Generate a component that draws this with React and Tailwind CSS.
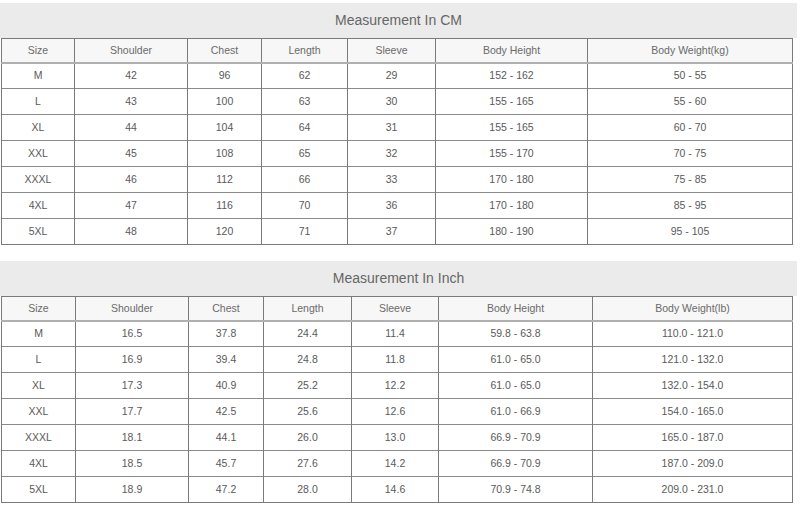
import React from "react";

const cm = {
  title: "Measurement In CM",
  cols: [73, 113, 74, 86, 88, 152, 205],
  head: ["Size", "Shoulder", "Chest", "Length", "Sleeve", "Body Height", "Body Weight(kg)"],
  rows: [
    ["M", "42", "96", "62", "29", "152 - 162", "50 - 55"],
    ["L", "43", "100", "63", "30", "155 - 165", "55 - 60"],
    ["XL", "44", "104", "64", "31", "155 - 165", "60 - 70"],
    ["XXL", "45", "108", "65", "32", "155 - 170", "70 - 75"],
    ["XXXL", "46", "112", "66", "33", "170 - 180", "75 - 85"],
    ["4XL", "47", "116", "70", "36", "170 - 180", "85 - 95"],
    ["5XL", "48", "120", "71", "37", "180 - 190", "95 - 105"],
  ],
};

const inch = {
  title: "Measurement In Inch",
  cols: [74, 113, 75, 88, 87, 154, 200],
  head: ["Size", "Shoulder", "Chest", "Length", "Sleeve", "Body Height", "Body Weight(lb)"],
  rows: [
    ["M", "16.5", "37.8", "24.4", "11.4", "59.8 - 63.8", "110.0 - 121.0"],
    ["L", "16.9", "39.4", "24.8", "11.8", "61.0 - 65.0", "121.0 - 132.0"],
    ["XL", "17.3", "40.9", "25.2", "12.2", "61.0 - 65.0", "132.0 - 154.0"],
    ["XXL", "17.7", "42.5", "25.6", "12.6", "61.0 - 66.9", "154.0 - 165.0"],
    ["XXXL", "18.1", "44.1", "26.0", "13.0", "66.9 - 70.9", "165.0 - 187.0"],
    ["4XL", "18.5", "45.7", "27.6", "14.2", "66.9 - 70.9", "187.0 - 209.0"],
    ["5XL", "18.9", "47.2", "28.0", "14.6", "70.9 - 74.8", "209.0 - 231.0"],
  ],
};

function SizeTable({ data }) {
  return (
    <div className="flex flex-col">
      <div className="w-[797px] h-[35px] bg-[#ebebeb] flex items-center justify-center text-[14px] text-[#666666]">
        {data.title}
      </div>
      <table className="ml-[1px] w-[792px] table-fixed border-collapse border border-[#7a7a7a] text-[10.5px] text-[#5a5a5a]">
        <colgroup>
          {data.cols.map((w, i) => (
            <col key={i} style={{ width: w }} />
          ))}
        </colgroup>
        <thead>
          <tr className="h-[24px] bg-[#f7f7f7] border-b-2 border-[#b0b0b0]">
            {data.head.map((h, i) => (
              <th key={i} className="font-normal text-center border-l border-[#7a7a7a] p-0 pt-[1px] text-[#6a6a6a]">
                {h}
              </th>
            ))}
          </tr>
        </thead>
        <tbody>
          {data.rows.map((r, ri) => (
            <tr key={ri} className="h-[26px] border-t border-[#8a8a8a]">
              {r.map((c, ci) => (
                <td key={ci} className="text-center border-l border-[#7a7a7a] p-0">
                  {c}
                </td>
              ))}
            </tr>
          ))}
        </tbody>
      </table>
    </div>
  );
}

export default function App() {
  return (
    <div
      className="w-[800px] h-[507px] bg-white pt-[3px] flex flex-col gap-[16px]"
      style={{ fontFamily: '"Liberation Sans", Arial, sans-serif' }}
    >
      <SizeTable data={cm} />
      <SizeTable data={inch} />
    </div>
  );
}
